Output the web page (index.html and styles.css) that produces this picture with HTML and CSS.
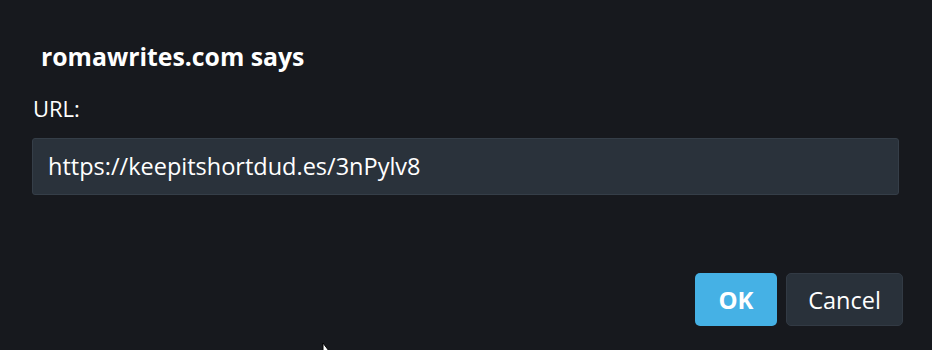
FILE: index.html
```html
<!DOCTYPE html>
<html>
<head>
<meta charset="utf-8">
<link rel="stylesheet" href="styles.css">
</head>
<body>
<div class="dialog">
  <h1 class="title">romawrites.com says</h1>
  <label class="label">URL:</label>
  <div class="input">https://keepitshortdud.es/3nPylv8</div>
  <div class="actions">
    <button class="btn btn-ok">OK</button>
    <button class="btn btn-cancel">Cancel</button>
  </div>
</div>
<svg class="cursor" width="10" height="8" viewBox="0 0 10 8"><path d="M1 0 L1 8 L7 8 Z" fill="#fff" stroke="#000" stroke-width="1"/></svg>
</body>
</html>
```
FILE: styles.css
```css
html, body {
  margin: 0;
  padding: 0;
  background: #17191e;
  width: 932px;
  height: 350px;
  overflow: hidden;
  font-family: "Open Sans", "Noto Sans", sans-serif;
  color: #ffffff;
}
.dialog {
  padding: 41px 33px 0 32px;
  display: flex;
  flex-direction: column;
}
.title {
  margin: 0 0 0 9px;
  font-size: 24.8px;
  font-weight: 700;
  line-height: 31px;
}
.label {
  margin-top: 21px;
  font-size: 22px;
  line-height: 30px;
  padding-left: 1px;
}
.input {
  margin-top: 15px;
  height: 57px;
  box-sizing: border-box;
  background: #2a323b;
  border: 1px solid #353e48;
  border-radius: 3px;
  font-size: 23.5px;
  line-height: 55px;
  padding-left: 15px;
}
.actions {
  margin-top: 78px;
  display: flex;
  justify-content: flex-end;
  gap: 9px;
  margin-right: -4px;
}
.btn {
  height: 53px;
  border: none;
  border-radius: 5px;
  font-family: inherit;
  font-size: 23.5px;
  color: #fff;
  padding: 0;
}
.btn-ok {
  width: 82px;
  background: #45b1e5;
  font-weight: 700;
  font-size: 24px;
}
.btn-cancel {
  width: 117px;
  background: #29313a;
  border: 1px solid #323a44;
}
.cursor {
  position: absolute;
  left: 322px;
  top: 343px;
}
```
